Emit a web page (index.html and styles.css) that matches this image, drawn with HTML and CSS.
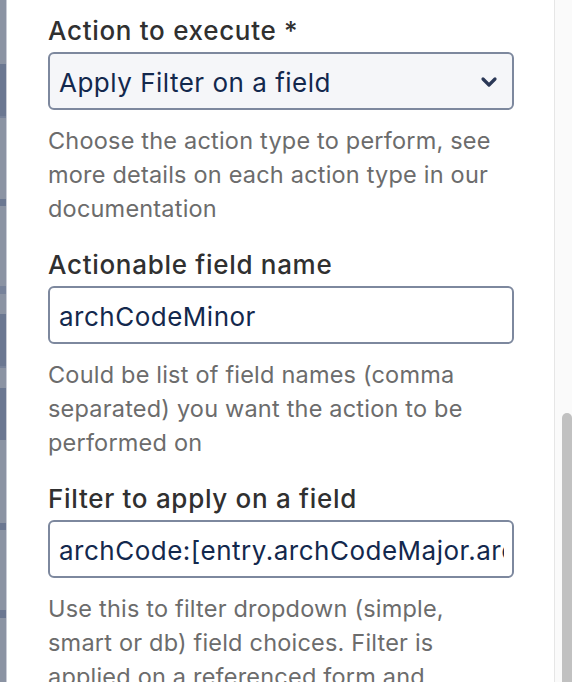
FILE: index.html
```html
<!DOCTYPE html>
<html lang="en">
<head>
<meta charset="utf-8">
<title>Action settings</title>
<link rel="stylesheet" href="styles.css">
</head>
<body>
<div class="page">
  <div class="backdrop">
    <div class="band light h64"></div>
    <div class="band dark h52"></div>
    <div class="band mid h2"></div>
    <div class="band light h81"></div>
    <div class="band dark h7"></div>
    <div class="band light h80"></div>
    <div class="band mid h8"></div>
    <div class="band light h20"></div>
    <div class="band dark h52"></div>
    <div class="band mid h2"></div>
    <div class="band light h20"></div>
    <div class="band dark h52"></div>
    <div class="band light h83"></div>
    <div class="band dark h7"></div>
    <div class="band light h80"></div>
    <div class="band dark h8"></div>
    <div class="band light grow"></div>
  </div>
  <main class="panel">
    <div class="field">
      <label class="label">Action to execute *</label>
      <div class="select">
        <span class="select-value">Apply Filter on a field</span>
        <svg class="chevron" width="18" height="12" viewBox="0 0 18 12"><path d="M3 3l6 6 6-6" fill="none" stroke="#2b3857" stroke-width="3.2" stroke-linecap="round" stroke-linejoin="round"/></svg>
      </div>
      <p class="help">Choose the action type to perform, see more details on each action type in our documentation</p>
    </div>
    <div class="field">
      <label class="label">Actionable field name</label>
      <input class="input" type="text" value="archCodeMinor" readonly>
      <p class="help">Could be list of field names (comma separated) you want the action to be performed on</p>
    </div>
    <div class="field">
      <label class="label">Filter to apply on a field</label>
      <input class="input" type="text" value="archCode:[entry.archCodeMajor.archCode]" readonly>
      <p class="help">Use this to filter dropdown (simple, smart or db) field choices. Filter is applied on a referenced form and</p>
    </div>
  </main>
  <div class="scrolltrack">
    <div class="thumb"></div>
  </div>
</div>
</body>
</html>
```
FILE: styles.css
```css
* { box-sizing: border-box; }
html, body { margin: 0; padding: 0; }
body {
  width: 572px;
  height: 682px;
  overflow: hidden;
  font-family: "Inter", "Noto Sans", sans-serif;
  background: #fff;
}
.page {
  display: flex;
  height: 682px;
}
.backdrop {
  width: 7px;
  display: flex;
  flex-direction: column;
  border-right: 1px solid #c9ccd6;
}
.band { width: 100%; flex-shrink: 0; }
.light { background: #8b93a3; }
.dark { background: #6b7791; }
.mid { background: #77829a; }
.h2 { height: 2px; }
.h7 { height: 7px; }
.h8 { height: 8px; }
.h20 { height: 20px; }
.h52 { height: 52px; }
.h64 { height: 64px; }
.h80 { height: 80px; }
.h81 { height: 81px; }
.h83 { height: 83px; }
.grow { flex: 1; }

.panel {
  flex: 1;
  min-width: 0;
  padding: 16px 40px 0 41px;
  display: flex;
  flex-direction: column;
  gap: 24px;
}
.field {
  display: flex;
  flex-direction: column;
}
.label {
  font-size: 26px;
  line-height: 30px;
  font-weight: 500;
  letter-spacing: 0.7px;
  color: #303030;
  margin-bottom: 6px;
}
.select, .input {
  height: 58px;
  border: 2px solid #7d889e;
  border-radius: 6px;
  font-family: inherit;
  font-size: 26px;
  letter-spacing: 0.5px;
  color: #13284d;
}
.select {
  background: #f5f6f9;
  display: flex;
  align-items: center;
  justify-content: space-between;
  padding: 2px 14px 0 9px;
}
.input {
  width: 100%;
  background: #fff;
  padding: 2px 8px 0 9px;
  outline: none;
}
.chevron { display: block; }
.help {
  margin: 14px 0 0;
  font-size: 23.5px;
  line-height: 34px;
  letter-spacing: 0.2px;
  color: #6c6c6c;
}
.scrolltrack {
  width: 18px;
  background: #fafafa;
  border-left: 1px solid #e6e6e6;
  padding: 413px 0 0 7px;
}
.thumb {
  height: 300px;
  background: #c1c1c1;
  border-radius: 6px 6px 0 0;
}
```
